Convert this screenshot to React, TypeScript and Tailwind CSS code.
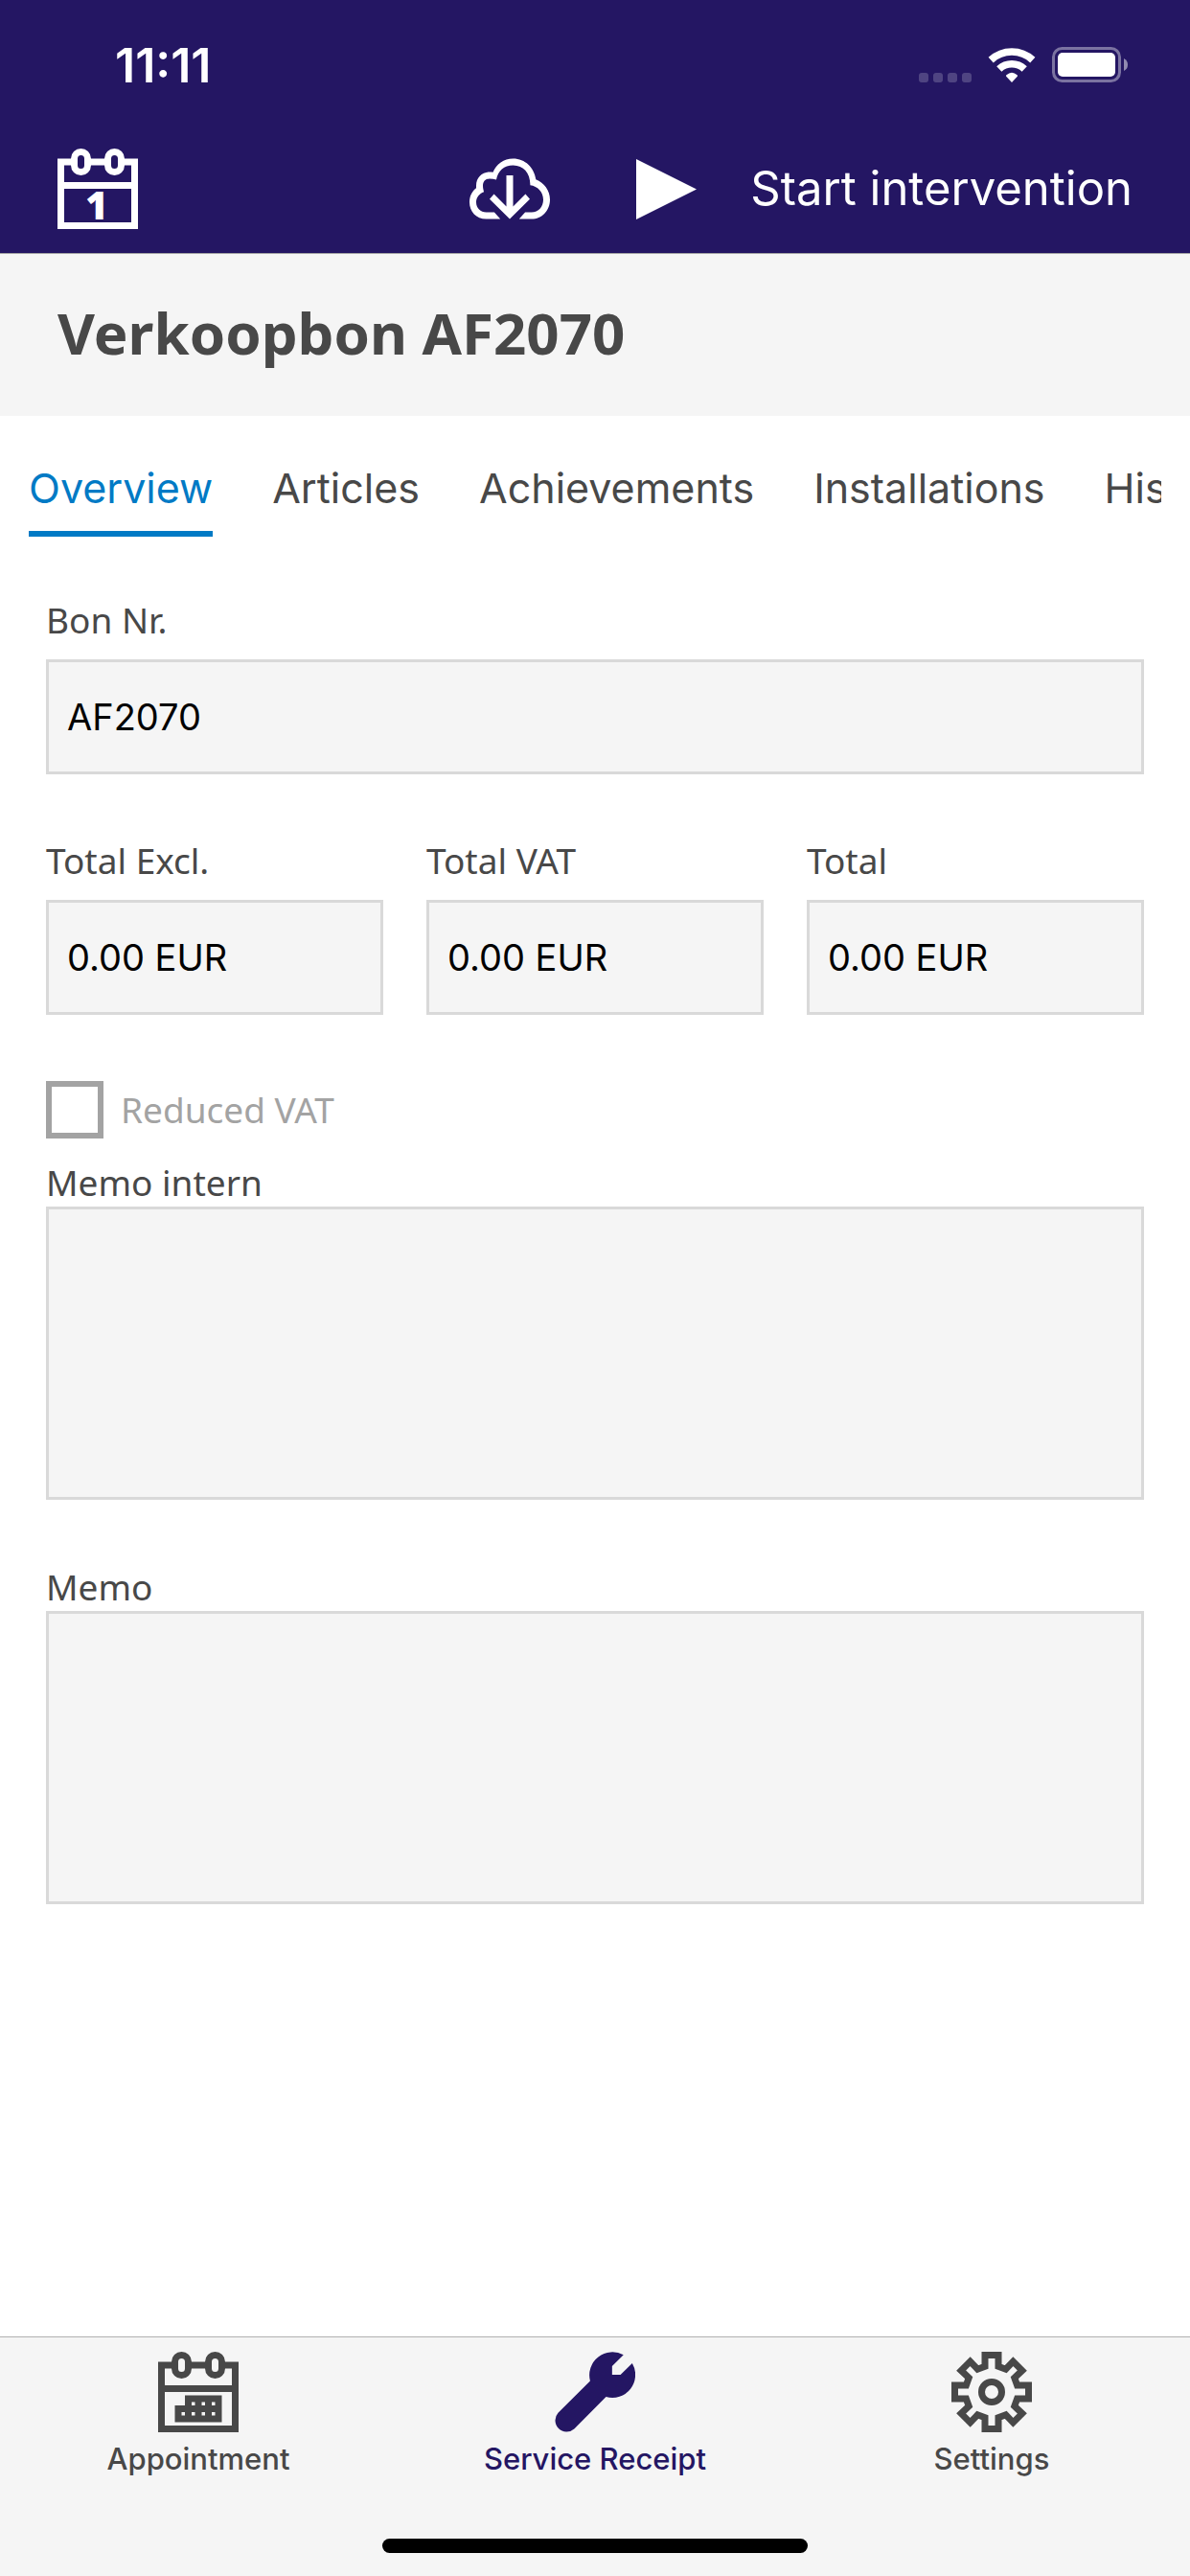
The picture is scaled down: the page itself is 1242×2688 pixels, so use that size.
import { useState } from 'react'

const tabs = ['Overview', 'Articles', 'Achievements', 'Installations', 'History']

const totals = [
  { id: 'total-excl', label: 'Total Excl.', value: '0.00 EUR' },
  { id: 'total-vat', label: 'Total VAT', value: '0.00 EUR' },
  { id: 'total', label: 'Total', value: '0.00 EUR' },
]

const navItems = [
  { name: 'Appointment', icon: AppointmentIcon },
  { name: 'Service Receipt', icon: WrenchIcon },
  { name: 'Settings', icon: GearIcon },
]

export default function App() {
  const [activeTab, setActiveTab] = useState('Overview')
  const [activeNav, setActiveNav] = useState('Service Receipt')

  return (
    <div className="flex min-h-screen flex-col bg-white font-['Inter',sans-serif] text-[#484848]">
      <header className="border-b border-[#a7a7a7] bg-[#241663] text-white">
        <StatusBar />
        <div className="flex h-[132px] items-center px-[60px] pb-0.5">
          <button type="button" aria-label="Calendar">
            <CalendarDayIcon />
          </button>
          <button type="button" aria-label="Download" className="ml-auto">
            <CloudIcon />
          </button>
          <button type="button" className="ml-[90px] flex items-center gap-14 text-[49px] leading-[60px]">
            <svg viewBox="0 0 18 18" className="size-[63px]" fill="currentColor">
              <path d="M0 0L18 9L0 18Z" />
            </svg>
            Start intervention
          </button>
        </div>
      </header>

      <div className="bg-[#f5f5f5] px-[60px] pt-[38px] pb-[42px]">
        <h1 className="font-['Noto_Sans',sans-serif] text-[60px] leading-[89px] font-bold">Verkoopbon AF2070</h1>
      </div>

      <nav className="mx-[30px] mt-[45px] flex gap-[62px] overflow-hidden">
        {tabs.map((tab) => (
          <button
            key={tab}
            type="button"
            onClick={() => setActiveTab(tab)}
            className={
              tab === activeTab
                ? 'border-b-6 border-[#007ac5] pb-[15px] text-[43px] leading-[60px] text-[#007ac5]'
                : 'border-b-6 border-transparent pb-[15px] text-[43px] leading-[60px]'
            }
          >
            {tab}
          </button>
        ))}
      </nav>

      <main className="flex-1 px-12 pt-[62px]">
        <Field id="bon-nr" label="Bon Nr." value="AF2070" />
        <div className="mt-[65px] grid grid-cols-3 gap-[45px]">
          {totals.map((total) => (
            <Field key={total.id} {...total} />
          ))}
        </div>

        <div className="mt-[69px] flex items-center gap-[18px] font-['Noto_Sans',sans-serif] text-[37px] leading-[60px] text-[#a3a3a3]">
          <input id="reduced-vat" type="checkbox" disabled className="size-[60px] appearance-none border-6 border-[#a3a3a3] bg-white" />
          <label htmlFor="reduced-vat">Reduced VAT</label>
        </div>

        <Memo id="memo-intern" label="Memo intern" className="mt-5" />
        <Memo id="memo" label="Memo" className="mt-[65px]" />
      </main>

      <footer className="border-t border-[#b0b0b0] bg-[#f5f5f5] pt-[15px] pb-6">
        <div className="grid grid-cols-3">
          {navItems.map(({ name, icon: Icon }) => (
            <button
              key={name}
              type="button"
              onClick={() => setActiveNav(name)}
              className={
                name === activeNav
                  ? 'flex flex-col items-center gap-2 text-[31px] leading-[40px] font-medium text-[#241663]'
                  : 'flex flex-col items-center gap-2 text-[31px] leading-[40px] font-medium'
              }
            >
              <Icon />
              {name}
            </button>
          ))}
        </div>
        <div className="mx-auto mt-[63px] h-[15px] w-[444px] rounded-full bg-black" />
      </footer>
    </div>
  )
}

function StatusBar() {
  return (
    <div className="flex h-[132px] items-center justify-between pt-1 pr-16 pl-[120px]">
      <span className="text-[50px] leading-[60px] font-semibold">11:11</span>
      <div className="flex items-center gap-[17px]">
        <svg viewBox="0 0 55 36" className="h-9 w-[55px]" fill="#fff" fillOpacity="0.2">
          <rect x="0" y="26" width="10" height="10" rx="3" />
          <rect x="15" y="26" width="10" height="10" rx="3" />
          <rect x="30" y="26" width="10" height="10" rx="3" />
          <rect x="45" y="26" width="10" height="10" rx="3" />
        </svg>
        <svg viewBox="0 0 50 36" className="h-9 w-[50px]" fill="none" stroke="#fff" strokeWidth="7.6">
          <path d="M3.2 12.6A32 32 0 0 1 46.8 12.6" />
          <path d="M11.8 21.9A19.3 19.3 0 0 1 38.2 21.9" />
          <path d="M25 36L19.2 29.8Q18.6 28.9 19.4 28.2Q25 23.2 30.6 28.2Q31.4 28.9 30.8 29.8Z" fill="#fff" stroke="none" />
        </svg>
        <svg viewBox="0 0 80 38" className="h-[38px] w-20">
          <rect x="1.5" y="1.5" width="69" height="34" rx="9" fill="none" stroke="#fff" strokeOpacity="0.4" strokeWidth="3" />
          <rect x="6" y="6" width="60" height="25" rx="5" fill="#fff" />
          <path d="M75 12Q79 14 79 18.5Q79 23 75 25Z" fill="#fff" fillOpacity="0.5" />
        </svg>
      </div>
    </div>
  )
}

function Field({ id, label, value }: { id: string, label: string, value: string }) {
  return (
    <div className="flex min-w-0 flex-col gap-4">
      <label htmlFor={id} className="font-['Noto_Sans',sans-serif] text-[37px] leading-[50px]">{label}</label>
      <input
        id={id}
        readOnly
        defaultValue={value}
        className="h-[120px] w-full border-3 border-[#d9d9d9] bg-[#f5f5f5] px-[19px] text-[38px] text-black outline-none"
      />
    </div>
  )
}

function Memo({ id, label, className }: { id: string, label: string, className: string }) {
  return (
    <div className={className}>
      <label htmlFor={id} className="block font-['Noto_Sans',sans-serif] text-[37px] leading-[51px]">{label}</label>
      <textarea
        id={id}
        readOnly
        className="block h-[306px] w-full resize-none border-3 border-[#d9d9d9] bg-[#f5f5f5] px-[19px] py-4 text-[38px] text-black outline-none"
      />
    </div>
  )
}

// page outline with the two binder rings, shared by both calendar icons
function CalendarFrame() {
  return (
    <g fill="none" stroke="currentColor" strokeWidth="2">
      <path d="M4.5 4H1V23H23V4H19.5M9.5 4H14.5M1 11H23" />
      <rect x="5" y="1" width="4" height="6" rx="2" />
      <rect x="15" y="1" width="4" height="6" rx="2" />
    </g>
  )
}

function CalendarDayIcon() {
  return (
    <svg viewBox="0 0 24 24" className="size-[84px]">
      <CalendarFrame />
      <text x="11.7" y="21" fill="currentColor" fontSize="11.4" fontWeight="800" textAnchor="middle" fontFamily="Open Sans, sans-serif">1</text>
    </svg>
  )
}

function AppointmentIcon() {
  return (
    <svg viewBox="0 0 24 24" className="size-[84px]">
      <CalendarFrame />
      <path
        fill="currentColor"
        fillRule="evenodd"
        d="M8 13H19V21H5V16H8ZM10 15V16H11V15ZM13 15V16H14V15ZM16 15V16H17V15ZM7 18V19H8V18ZM10 18V19H11V18ZM13 18V19H14V18ZM16 18V19H17V18Z"
      />
    </svg>
  )
}

function CloudIcon() {
  return (
    <svg viewBox="0 0 24 24" className="size-[84px]" fill="currentColor">
      <path d="M9.2 21H5C2 21 0 18.8 0 16C0 14.2 .8 12.7 2 11.8V11C2 8.7 3.8 7 6 7C6.4 7 6.7 7 7 7.1C8 4.7 10.2 3 13 3C16.6 3 19.3 5.7 19.8 9.2C22.3 10.2 24 12.5 24 15.2C24 18.5 21.6 21 18.5 21H14.8L16.6 19H18.5C20.6 19 22 17.3 22 15.2C22 12.9 20.3 11.2 18.1 10.9C18.2 7.5 16.2 5 13 5C10.3 5 8.5 6.7 8 9.3C7.4 9.1 6.7 9 6 9C4.7 9 4 9.9 4 11.1C4 11.7 4.1 12.2 4.3 12.9C2.9 13.5 2 14.5 2 16C2 17.7 3.3 19 5 19H7.4Z" />
      <path d="M11 8H13V17.3L16.7 13.6L18 15.1L12 21L6 15.1L7.3 13.6L11 17.3Z" />
    </svg>
  )
}

function WrenchIcon() {
  return (
    <svg viewBox="0 0 24 24" className="size-[84px]" fill="currentColor">
      <path d="M20.5 .95L17.1 4.3V6.86H19.6L23.1 3.4A6.86 6.86 0 0 1 15.3 13.45L5.8 23A3.4 3.4 0 0 1 1 18.2L10.55 8.7A6.86 6.86 0 0 1 20.5 .95Z" />
    </svg>
  )
}

function GearIcon() {
  return (
    <svg viewBox="0 0 24 24" className="size-[84px]" fill="none" stroke="currentColor" strokeWidth="2">
      <path d="M10 1H14V4.4L16.2 5.2L18.4 2.9L21.1 5.6L18.8 7.8L19.6 10H23V14H19.6L18.8 16.2L21.1 18.4L18.4 21.1L16.2 18.8L14 19.6V23H10V19.6L7.8 18.8L5.6 21.1L2.9 18.4L5.2 16.2L4.4 14H1V10H4.4L5.2 7.8L2.9 5.6L5.6 2.9L7.8 5.2L10 4.4Z" />
      <circle cx="12" cy="12" r="3" />
    </svg>
  )
}
